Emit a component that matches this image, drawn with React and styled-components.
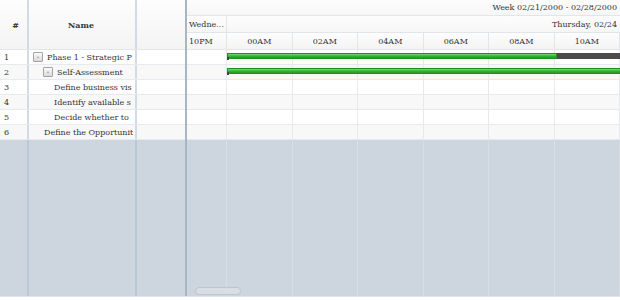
import React from 'react';
import styled, { createGlobalStyle } from 'styled-components';

const GlobalStyle = createGlobalStyle`
  html, body {
    margin: 0;
    padding: 0;
    background: #fff;
  }
  body {
    font-family: "DejaVu Serif", serif;
    font-size: 8px;
    color: #333;
  }
`;

const tasks = [
  { id: 1, name: 'Phase 1 - Strategic P', level: 0, parent: true },
  { id: 2, name: 'Self-Assessment', level: 1, parent: true },
  { id: 3, name: 'Define business vis', level: 2 },
  { id: 4, name: 'Identify available s', level: 2 },
  { id: 5, name: 'Decide whether to', level: 2 },
  { id: 6, name: 'Define the Opportunit', level: 1 },
];

const hours = ['10PM', '00AM', '02AM', '04AM', '06AM', '08AM', '10AM'];

// bars: start / width in px relative to the timeline
const bars = {
  1: { left: 40, green: 330, dark: 80 },
  2: { left: 40, green: 420, dark: 0 },
};

function App() {
  return (
    <>
      <GlobalStyle />
      <Wrapper>
        <LeftGrid>
          <HeadRow>
            <NumCell header>#</NumCell>
            <NameCell header>Name</NameCell>
            <ExtraCell header />
          </HeadRow>
          {tasks.map((t, i) => (
            <Row key={t.id} alt={i % 2 === 1}>
              <NumCell>{t.id}</NumCell>
              <NameCell style={{ paddingLeft: 4 + t.level * 10 }}>
                {t.parent ? <Toggle>-</Toggle> : <Spacer />}
                <NameText>{t.name}</NameText>
              </NameCell>
              <ExtraCell />
            </Row>
          ))}
          <FillRow>
            <NumCell fill />
            <NameCell fill />
            <ExtraCell fill />
          </FillRow>
        </LeftGrid>
        <Splitter />
        <Timeline>
          <WeekRow>Week 02/21/2000 - 02/28/2000</WeekRow>
          <DayRow>
            <DayCell>Wedne...</DayCell>
            <DayCell wide>Thursday, 02/24</DayCell>
          </DayRow>
          <HourRow>
            {hours.map((h, i) => (
              <HourCell key={h} first={i === 0}>{h}</HourCell>
            ))}
          </HourRow>
          {tasks.map((t, i) => (
            <Row key={t.id} alt={i % 2 === 1}>
              {hours.map((h, j) => (
                <TimeCell key={h} first={j === 0} />
              ))}
              {bars[t.id] && (
                <Bar style={{ left: bars[t.id].left }}>
                  <Green style={{ width: bars[t.id].green }} />
                  {bars[t.id].dark > 0 && <Dark style={{ width: bars[t.id].dark }} />}
                  <Tick />
                </Bar>
              )}
            </Row>
          ))}
          <FillRow>
            {hours.map((h, j) => (
              <TimeCell key={h} first={j === 0} fill />
            ))}
            <ScrollThumb />
          </FillRow>
        </Timeline>
      </Wrapper>
    </>
  );
}

const Wrapper = styled.div`
  display: flex;
  height: 296px;
  width: 620px;
  overflow: hidden;
  border-bottom: 1px solid #dfe5ea;
`;

const LeftGrid = styled.div`
  display: flex;
  flex-direction: column;
  width: 185px;
  flex-shrink: 0;
`;

const HeadRow = styled.div`
  display: flex;
  height: 50px;
  background: linear-gradient(#fdfdfd, #f4f4f4);
  border-bottom: 1px solid #e1e6eb;
  box-sizing: border-box;
`;

const Row = styled.div`
  position: relative;
  display: flex;
  height: 15px;
  box-sizing: border-box;
  border-bottom: 1px solid #e6eaee;
  background: ${p => (p.alt ? '#f8f8f8' : '#fff')};
`;

const FillRow = styled.div`
  position: relative;
  display: flex;
  flex: 1;
  background: #cdd6df;
`;

const cellBase = `
  box-sizing: border-box;
  display: flex;
  align-items: center;
  overflow: hidden;
  white-space: nowrap;
`;

const NumCell = styled.div`
  ${cellBase}
  width: 29px;
  padding-left: 4px;
  border-right: 2px solid ${p => (p.fill ? '#b9c8d7' : '#cfdbe6')};
  justify-content: ${p => (p.header ? 'center' : 'flex-start')};
  font-weight: ${p => (p.header ? 'bold' : 'normal')};
`;

const NameCell = styled.div`
  ${cellBase}
  width: 108px;
  padding-right: 2px;
  border-right: 2px solid ${p => (p.fill ? '#b9c8d7' : '#cfdbe6')};
  justify-content: ${p => (p.header ? 'center' : 'flex-start')};
  font-weight: ${p => (p.header ? 'bold' : 'normal')};
`;

const ExtraCell = styled.div`
  ${cellBase}
  flex: 1;
`;

const Toggle = styled.span`
  display: inline-flex;
  align-items: center;
  justify-content: center;
  width: 10px;
  height: 10px;
  box-sizing: border-box;
  border: 1px solid #a4a4a4;
  border-radius: 1px;
  background: linear-gradient(#fbfbfb, #d9d9d9);
  font-size: 7px;
  line-height: 1;
  color: #444;
  margin-right: 4px;
  flex-shrink: 0;
`;

const Spacer = styled.span`
  width: 1px;
  flex-shrink: 0;
`;

const NameText = styled.span`
  overflow: hidden;
`;

const Splitter = styled.div`
  width: 2px;
  flex-shrink: 0;
  background: #a8b6c4;
`;

const Timeline = styled.div`
  display: flex;
  flex-direction: column;
  flex: 1;
  min-width: 0;
  overflow: hidden;
`;

const WeekRow = styled.div`
  height: 16px;
  box-sizing: border-box;
  display: flex;
  align-items: center;
  justify-content: flex-end;
  padding-right: 3px;
  background: linear-gradient(#fdfdfd, #f6f6f6);
  border-bottom: 1px solid #e1e6eb;
  white-space: nowrap;
`;

const DayRow = styled.div`
  display: flex;
  height: 17px;
  box-sizing: border-box;
  border-bottom: 1px solid #e1e6eb;
  background: linear-gradient(#fdfdfd, #f6f6f6);
`;

const DayCell = styled.div`
  ${cellBase}
  width: ${p => (p.wide ? 'auto' : '40px')};
  flex: ${p => (p.wide ? 1 : 'none')};
  justify-content: ${p => (p.wide ? 'flex-end' : 'flex-start')};
  padding: 0 3px 0 2px;
  border-right: ${p => (p.wide ? 'none' : '1px solid #e1e6eb')};
`;

const HourRow = styled.div`
  display: flex;
  height: 17px;
  box-sizing: border-box;
  border-bottom: 1px solid #e1e6eb;
  background: linear-gradient(#fdfdfd, #f4f4f4);
`;

const HourCell = styled.div`
  ${cellBase}
  flex: none;
  width: ${p => (p.first ? '40px' : '65.5px')};
  justify-content: ${p => (p.first ? 'flex-start' : 'center')};
  padding-left: ${p => (p.first ? '2px' : '0')};
  border-right: 1px solid #e1e6eb;
`;

const TimeCell = styled.div`
  flex: none;
  box-sizing: border-box;
  width: ${p => (p.first ? '40px' : '65.5px')};
  border-right: 1px solid ${p => (p.fill ? '#d6dde4' : '#e6eaee')};
`;

const Bar = styled.div`
  position: absolute;
  top: 3px;
  display: flex;
  height: 6px;
`;

const Green = styled.div`
  height: 100%;
  box-sizing: border-box;
  background: linear-gradient(#6fdc6f, #2fb22f 55%, #229922);
  border: 1px solid #1f8f1f;
`;

const Dark = styled.div`
  height: 100%;
  background: #4a4a4a;
`;

const Tick = styled.div`
  position: absolute;
  left: 0;
  top: 4px;
  width: 2px;
  height: 3px;
  background: #444;
`;

const ScrollThumb = styled.div`
  position: absolute;
  left: 8px;
  bottom: 1px;
  width: 46px;
  height: 8px;
  box-sizing: border-box;
  border: 1px solid #bcc6cf;
  border-radius: 4px;
  background: #d8dee4;
`;

export default App;
